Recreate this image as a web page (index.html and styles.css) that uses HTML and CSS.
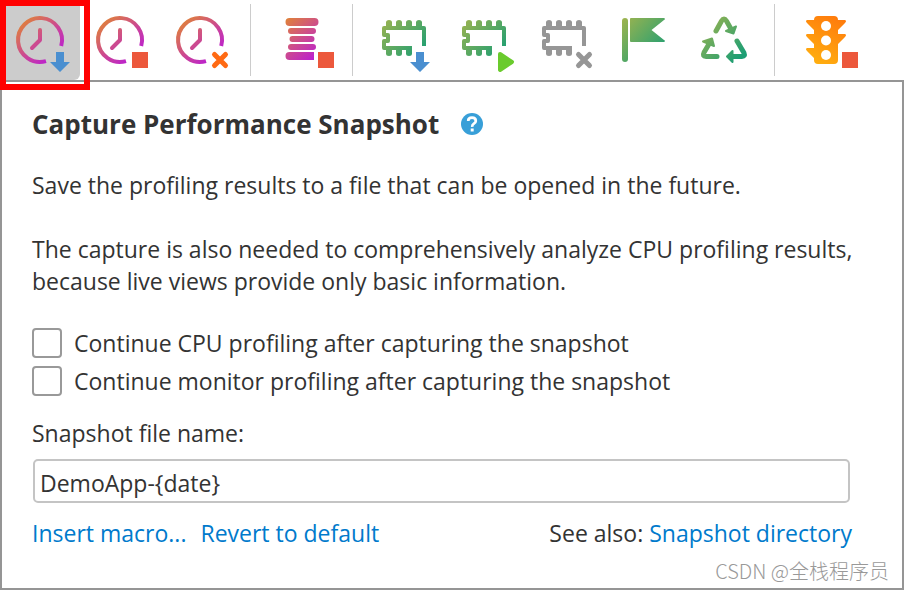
FILE: index.html
```html
<!DOCTYPE html>
<html lang="en">
<head>
  <meta charset="UTF-8">
  <meta name="viewport" content="width=device-width, initial-scale=1.0">
  <link rel="stylesheet" href="styles.css">
  <title>Capture Performance Snapshot</title>
</head>
<body>
  <!-- shared gradients and shapes -->
  <svg class="defs" aria-hidden="true">
    <defs>
      <linearGradient id="sunset" gradientUnits="userSpaceOnUse" x1="22" y1="20" x2="58" y2="60">
        <stop offset="0" stop-color="#e08238"/>
        <stop offset="0.5" stop-color="#cc4a90"/>
        <stop offset="1" stop-color="#b818dc"/>
      </linearGradient>
      <linearGradient id="leaf" gradientUnits="userSpaceOnUse" x1="18" y1="18" x2="58" y2="56">
        <stop offset="0" stop-color="#a0b44e"/>
        <stop offset="1" stop-color="#1c9e74"/>
      </linearGradient>
      <linearGradient id="amber" gradientUnits="userSpaceOnUse" x1="52" y1="16" x2="28" y2="64">
        <stop offset="0" stop-color="#ff7a0c"/>
        <stop offset="1" stop-color="#ffb010"/>
      </linearGradient>
      <symbol id="clock" viewBox="0 0 80 80">
        <path d="M46 61.2A22 22 0 1 1 61.2 46" fill="none" stroke="url(#sunset)" stroke-width="4"/>
        <path d="M40 30V40L32 48" fill="none" stroke="url(#sunset)" stroke-width="4" stroke-linecap="round" stroke-linejoin="round"/>
      </symbol>
      <symbol id="chip" viewBox="0 0 80 80">
        <path d="M60 46V28H20V35H24V41H20V48H48" fill="none" stroke="currentColor" stroke-width="4" stroke-linejoin="round"/>
        <path d="M22 27V22.500a3 2.500 0 0 1 6 0V27zM32 27V22.500a3 2.500 0 0 1 6 0V27zM42 27V22.500a3 2.500 0 0 1 6 0V27zM52 27V22.500a3 2.500 0 0 1 6 0V27zM22 49V53.500a3 2.500 0 0 0 6 0V49zM32 49V53.500a3 2.500 0 0 0 6 0V49zM42 49V53.500a3 2.500 0 0 0 6 0V49z" fill="currentColor"/>
      </symbol>
      <symbol id="chip-leaf" viewBox="0 0 80 80">
        <path d="M60 46V28H20V35H24V41H20V48H48" fill="none" stroke="url(#leaf)" stroke-width="4" stroke-linejoin="round"/>
        <path d="M22 27V22.500a3 2.500 0 0 1 6 0V27zM32 27V22.500a3 2.500 0 0 1 6 0V27zM42 27V22.500a3 2.500 0 0 1 6 0V27zM52 27V22.500a3 2.500 0 0 1 6 0V27zM22 49V53.500a3 2.500 0 0 0 6 0V49zM32 49V53.500a3 2.500 0 0 0 6 0V49zM42 49V53.500a3 2.500 0 0 0 6 0V49z" fill="url(#leaf)"/>
      </symbol>
    </defs>
  </svg>

  <header class="toolbar">
    <button class="tool active" aria-label="Capture performance snapshot">
      <svg viewBox="0 0 80 80">
        <use href="#clock"/>
        <path d="M56 52H64V62H70L60 72L50 62H56Z" fill="#4a8fd0"/>
      </svg>
    </button>
    <button class="tool" aria-label="Stop CPU profiling">
      <svg viewBox="0 0 80 80">
        <use href="#clock"/>
        <rect x="52" y="52" width="16" height="16" fill="#ec583c"/>
      </svg>
    </button>
    <button class="tool" aria-label="Clear CPU data">
      <svg viewBox="0 0 80 80">
        <use href="#clock"/>
        <path d="M54.500 54.500L65.500 65.500M65.500 54.500L54.500 65.500" stroke="#ff6a13" stroke-width="5" stroke-linecap="round"/>
      </svg>
    </button>
    <span class="separator"></span>
    <button class="tool" aria-label="Stop monitor profiling">
      <svg viewBox="0 0 80 80">
        <path d="M27.500 18H52.500a4 4 0 0 1 0 8H27.500a4 4 0 0 1 0-8zM29 28H51a3 3 0 0 1 0 6H29a3 3 0 0 1 0-6zM30.500 36H49.500a3 3 0 0 1 0 6H30.500a3 3 0 0 1 0-6zM29 44H51a3 3 0 0 1 0 6H29a3 3 0 0 1 0-6zM52 52V60H27.500a4 4 0 0 1 0-8z" fill="url(#sunset)"/>
        <rect x="56" y="52" width="16" height="16" fill="#ec583c"/>
      </svg>
    </button>
    <span class="separator"></span>
    <button class="tool" aria-label="Capture memory snapshot">
      <svg viewBox="0 0 80 80">
        <use href="#chip-leaf"/>
        <path d="M52 52H60V62H66L56 72L46 62H52Z" fill="#4a8fd0"/>
      </svg>
    </button>
    <button class="tool" aria-label="Start allocation recording">
      <svg viewBox="0 0 80 80">
        <use href="#chip-leaf"/>
        <path d="M56 54L68 62L56 70Z" fill="#6acb2d" stroke="#6acb2d" stroke-width="4" stroke-linejoin="round"/>
      </svg>
    </button>
    <button class="tool" aria-label="Clear allocation data">
      <svg class="muted" viewBox="0 0 80 80">
        <use href="#chip"/>
        <path d="M54.500 54.500L65.500 65.500M65.500 54.500L54.500 65.500" stroke="currentColor" stroke-width="5" stroke-linecap="round"/>
      </svg>
    </button>
    <button class="tool" aria-label="Advance object generation">
      <svg viewBox="0 0 80 80">
        <g fill="url(#leaf)">
          <rect x="18" y="18" width="6" height="44" rx="3"/>
          <path d="M26 19q0-1 1-1H60q2 1 0 2L47.500 30L60 40q2 1 0 2H27q-1 0-1-1z"/>
        </g>
      </svg>
    </button>
    <button class="tool" aria-label="Force garbage collection">
      <svg viewBox="0 0 80 80">
        <g fill="none" stroke="url(#leaf)" stroke-width="5" stroke-linecap="round">
          <path d="M32 31L37.500 21Q40 17 42.500 21L47 29"/>
          <path d="M53 41L60 53Q61.500 56.500 58 56.500H48"/>
          <path d="M33 56.500H22Q18 56.500 20 52.500L25 44"/>
        </g>
        <path d="M52 26.500L42 31L49.500 33.500Z M43 56.500L48.500 51V62Z M28 38.500L30 46L19 41.500Z" fill="url(#leaf)" stroke="url(#leaf)" stroke-width="2" stroke-linejoin="round"/>
      </svg>
    </button>
    <span class="separator"></span>
    <button class="tool" aria-label="Stop telemetry">
      <svg viewBox="0 0 80 80">
        <path d="M32 16H48Q52 16 52 20H59Q61 21 59 23L52 30V34H59Q61 35 59 37L52 44V60Q52 64 48 64H32Q28 64 28 60V58L21 51Q19 49 21 48H28V44L21 37Q19 35 21 34H28V30L21 23Q19 21 21 20H28Q28 16 32 16Z" fill="url(#amber)"/>
        <g fill="#fff">
          <circle cx="40" cy="26" r="5"/>
          <circle cx="40" cy="40.500" r="5"/>
          <circle cx="40" cy="55" r="5"/>
        </g>
        <rect x="56" y="52" width="16" height="16" fill="#ec583c"/>
      </svg>
    </button>
    <div class="highlight"></div>
  </header>

  <main class="panel">
    <div class="heading">
      <h1>Capture Performance Snapshot</h1>
      <button class="help" aria-label="Help">
        <svg viewBox="0 0 22 22">
          <circle cx="11" cy="11" r="11" fill="#389fd8"/>
          <path d="M7.200 8Q7.200 4.700 11 4.700T14.800 8Q14.800 9.500 12.900 10.700T11.200 13.800" fill="none" stroke="#fff" stroke-width="2.700"/>
          <rect x="9.700" y="15.500" width="3" height="3" fill="#fff"/>
        </svg>
      </button>
    </div>

    <p>Save the profiling results to a file that can be opened in the future.</p>
    <p>The capture is also needed to comprehensively analyze CPU profiling results, because live views provide only basic information.</p>

    <form class="options">
      <label class="check"><input type="checkbox"> Continue CPU profiling after capturing the snapshot</label>
      <label class="check"><input type="checkbox"> Continue monitor profiling after capturing the snapshot</label>
      <label class="field-label" for="filename">Snapshot file name:</label>
      <input class="field" id="filename" type="text" value="DemoApp-{date}">
    </form>

    <div class="links">
      <a href="#">Insert macro...</a>
      <a href="#">Revert to default</a>
      <span class="see-also">See also: <a href="#">Snapshot directory</a></span>
    </div>
    <div class="watermark">CSDN @全栈程序员</div>
  </main>
</body>
</html>
```

FILE: styles.css
```css
* {
  box-sizing: border-box;
}

body {
  display: flex;
  flex-direction: column;
  min-height: 100vh;
  margin: 0;
  font-family: "Open Sans", "Noto Sans CJK SC", sans-serif;
  font-size: 23px;
  line-height: 32px;
  color: #333;
  background-color: #fff;
}

.defs {
  position: absolute;
  width: 0;
  height: 0;
}

/* toolbar */
.toolbar {
  display: flex;
  position: relative;
  height: 80px;
}

.tool {
  flex: none;
  width: 80px;
  height: 80px;
  padding: 0;
  border: none;
  background: none;
  cursor: pointer;
}

.tool svg {
  display: block;
  width: 80px;
  height: 80px;
}

.tool.active {
  background-color: #ccc;
  border-radius: 0 0 6px 0;
}

.tool .muted {
  color: #969696;
}

.separator {
  flex: none;
  width: 1px;
  margin: 4px 11px 4px 10px;
  background-color: #ccc;
}

.highlight {
  position: absolute;
  top: 0;
  left: 0;
  width: 90px;
  height: 90px;
  border: 6px solid #f00;
  pointer-events: none;
}

/* panel */
.panel {
  flex: 1;
  padding: 25px 50px 0 30px;
  border: 2px solid #959595;
}

.heading {
  display: flex;
  align-items: center;
  gap: 22px;
}

h1 {
  margin: 0;
  font-size: 26px;
  line-height: 34px;
}

.help {
  width: 22px;
  height: 22px;
  padding: 0;
  border: none;
  background: none;
  cursor: pointer;
}

.help svg {
  display: block;
}

p {
  margin: 28px -20px 32px 0;
}

p + p {
  margin-top: 0;
  margin-bottom: 27px;
}

.options {
  display: flex;
  flex-direction: column;
}

.check {
  display: flex;
  align-items: center;
  gap: 12px;
  height: 38px;
}

.check input {
  appearance: none;
  width: 30px;
  height: 30px;
  margin: 0;
  border: 2px solid #999;
  border-radius: 4px;
  background-color: #fff;
}

.check input:checked {
  background-color: #389fd8;
}

.field-label {
  margin-top: 17px;
}

.field {
  height: 44px;
  margin: 10px 2px 0 1px;
  padding: 4px 5px 0;
  border: 2px solid #c4c4c4;
  border-radius: 5px;
  font: inherit;
  color: inherit;
}

.links {
  display: flex;
  gap: 14px;
  margin-top: 14px;
}

a {
  color: #007acc;
  text-decoration: none;
}

a:hover {
  text-decoration: underline;
}

.see-also {
  margin-left: auto;
}

.watermark {
  margin: 8px -37px 0 0;
  font-family: "Noto Sans CJK SC", sans-serif;
  font-size: 20px;
  font-weight: 300;
  line-height: 28px;
  text-align: right;
  color: #999;
}
```
